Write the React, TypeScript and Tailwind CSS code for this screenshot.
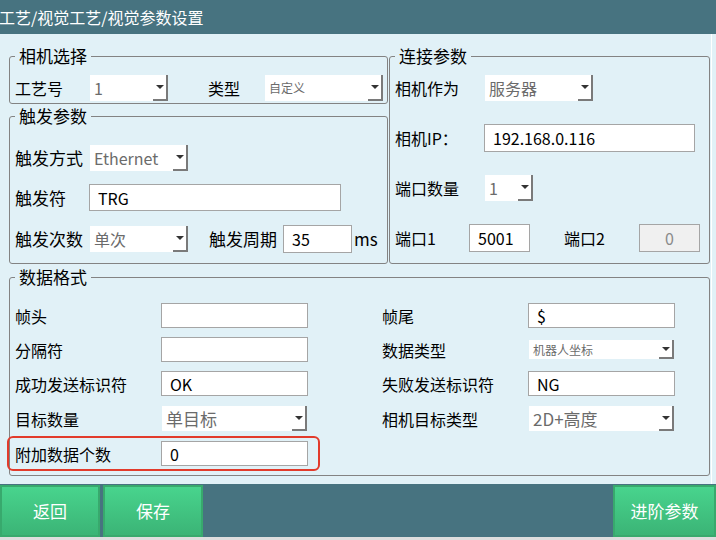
import React from 'react';

function Arrow() {
  return <div className="w-0 h-0 border-x-[4px] border-x-transparent border-t-[4px] border-t-[#333333]" />;
}

function Select({ className = '', text, textClass = 'text-[16px]' }: { className?: string; text: string; textClass?: string }) {
  return (
    <div className={`flex shrink-0 bg-white ${className}`}>
      <div className={`flex-1 flex items-center pl-[4px] text-[#6b6b6b] whitespace-nowrap overflow-hidden ${textClass}`}>{text}</div>
      <div className="w-[15px] shrink-0 flex items-center justify-center border-r-2 border-b-2 border-[#7a7a7a]">
        <Arrow />
      </div>
    </div>
  );
}

function Input({ className = '', text = '', disabled = false }: { className?: string; text?: string; disabled?: boolean }) {
  return (
    <div
      className={`flex shrink-0 items-center border border-[#a5a5a5] text-[16px] whitespace-nowrap ${
        disabled ? 'bg-[#f0f0f0] text-[#8a8a8a] justify-center' : 'bg-white text-black pl-[8px]'
      } ${className}`}
    >
      {text}
    </div>
  );
}

function Label({ className = '', children }: { className?: string; children: React.ReactNode }) {
  return <div className={`shrink-0 whitespace-nowrap text-[16px] ${className}`}>{children}</div>;
}

function Group({ title, className = '', children }: { title: string; className?: string; children: React.ReactNode }) {
  return (
    <fieldset className={`border border-[#838383] rounded-[3px] px-[5px] m-0 min-w-0 ${className}`}>
      <legend className="px-1 text-[17px] leading-[22px]">{title}</legend>
      {children}
    </fieldset>
  );
}

function Button({ className = '', children }: { className?: string; children: React.ReactNode }) {
  return (
    <div
      className={`h-[52px] flex items-center justify-center text-white text-[17px] border-2 border-[#38a96d] bg-linear-to-b from-[#48d48d] to-[#3bb476] ${className}`}
    >
      {children}
    </div>
  );
}

export default function App() {
  return (
    <div className="w-[716px] h-[540px] flex flex-col overflow-hidden text-black font-['Noto_Sans_CJK_SC','Noto_Sans',sans-serif]">
      <div className="h-[34px] shrink-0 bg-[#477380] text-white text-[16px] leading-[34px] -ml-px">工艺/视觉工艺/视觉参数设置</div>

      <div className="h-[450px] shrink-0 bg-[#e1f1f7] flex">
        <div className="w-[711px] pt-[11px] pl-[9px] flex flex-col">
          <div className="grid grid-cols-[379px_321px] gap-x-px">
            <div className="flex flex-col gap-px">
              <Group title="相机选择" className="h-[59px]">
                <div className="flex items-center h-[26px] mt-[8px]">
                  <Label className="w-[75px]">工艺号</Label>
                  <Select className="w-[78px] h-[26px]" text="1" />
                  <Label className="ml-[40px] w-[57px]">类型</Label>
                  <Select className="w-[118px] h-[26px]" text="自定义" textClass="text-[12px]" />
                </div>
              </Group>

              <Group title="触发参数" className="h-[159px]">
                <div className="flex items-center h-[26px] mt-[18px]">
                  <Label className="w-[75px] text-[17px]">触发方式</Label>
                  <Select className="w-[98px] h-[26px]" text="Ethernet" />
                </div>
                <div className="flex items-center h-[27px] mt-[13px]">
                  <Label className="w-[74px] text-[17px]">触发符</Label>
                  <Input className="w-[252px] h-[27px]" text="TRG" />
                </div>
                <div className="flex items-center h-[27px] mt-[14px]">
                  <Label className="w-[75px] text-[17px]">触发次数</Label>
                  <Select className="w-[98px] h-[26px]" text="单次" />
                  <Label className="ml-[21px] w-[68px] text-[17px]">触发周期</Label>
                  <Input className="ml-[6px] w-[69px] h-[28px]" text="35" />
                  <Label className="ml-[2px] text-[17px]">ms</Label>
                </div>
              </Group>
            </div>

            <Group title="连接参数" className="h-[219px]">
              <div className="flex items-center h-[26px] mt-[8px]">
                <Label className="w-[90px]">相机作为</Label>
                <Select className="w-[108px] h-[26px]" text="服务器" />
              </div>
              <div className="flex items-center h-[28px] mt-[23px]">
                <Label className="w-[89px]">相机IP：</Label>
                <Input className="w-[211px] h-[28px]" text="192.168.0.116" />
              </div>
              <div className="flex items-center h-[26px] mt-[23px]">
                <Label className="w-[90px] text-[15px]">端口数量</Label>
                <Select className="w-[48px] h-[26px]" text="1" />
              </div>
              <div className="flex items-center h-[28px] mt-[23px]">
                <Label className="w-[74px]">端口1</Label>
                <Input className="w-[61px] h-[28px]" text="5001" />
                <Label className="ml-[34px] w-[75px]">端口2</Label>
                <Input className="w-[61px] h-[28px]" text="0" disabled />
              </div>
            </Group>
          </div>

          <Group title="数据格式" className="h-[210px] w-[701px] mt-[2px]">
            <div className="flex items-center h-[25px] mt-[15px]">
              <div className="w-[367px] flex items-center">
                <Label className="w-[146px]">帧头</Label>
                <Input className="w-[147px] h-[25px]" />
              </div>
              <Label className="w-[146px]">帧尾</Label>
              <Input className="w-[147px] h-[25px]" text="$" />
            </div>
            <div className="flex items-center h-[25px] mt-[9px]">
              <div className="w-[367px] flex items-center">
                <Label className="w-[146px]">分隔符</Label>
                <Input className="w-[147px] h-[25px]" />
              </div>
              <Label className="w-[147px]">数据类型</Label>
              <Select className="w-[145px] h-[19px]" text="机器人坐标" textClass="text-[12px]" />
            </div>
            <div className="flex items-center h-[25px] mt-[9px]">
              <div className="w-[367px] flex items-center">
                <Label className="w-[146px]">成功发送标识符</Label>
                <Input className="w-[147px] h-[25px]" text="OK" />
              </div>
              <Label className="w-[146px]">失败发送标识符</Label>
              <Input className="w-[147px] h-[25px]" text="NG" />
            </div>
            <div className="flex items-center h-[25px] mt-[10px]">
              <div className="w-[367px] flex items-center">
                <Label className="w-[147px]">目标数量</Label>
                <Select className="w-[145px] h-[25px]" text="单目标" textClass="text-[17px]" />
              </div>
              <Label className="w-[147px]">相机目标类型</Label>
              <Select className="w-[145px] h-[25px]" text="2D+高度" textClass="text-[17px]" />
            </div>
            <div className="flex items-center h-[25px] mt-[10px]">
              <div className="-ml-[8px] -my-[5px] w-[313px] h-[35px] shrink-0 flex items-center pl-[6px] border-2 border-[#e23b2b] rounded-[6px]">
                <Label className="w-[146px]">附加数据个数</Label>
                <Input className="w-[147px] h-[25px]" text="0" />
              </div>
            </div>
          </Group>
        </div>
        <div className="w-px bg-white" />
      </div>

      <div className="h-[53px] shrink-0 bg-[#477380] pt-px flex gap-[3px]">
        <Button className="w-[100px]">返回</Button>
        <Button className="w-[100px]">保存</Button>
        <Button className="w-[103px] ml-auto">进阶参数</Button>
      </div>
      <div className="h-[3px] shrink-0 bg-[#dedede]" />
    </div>
  );
}
